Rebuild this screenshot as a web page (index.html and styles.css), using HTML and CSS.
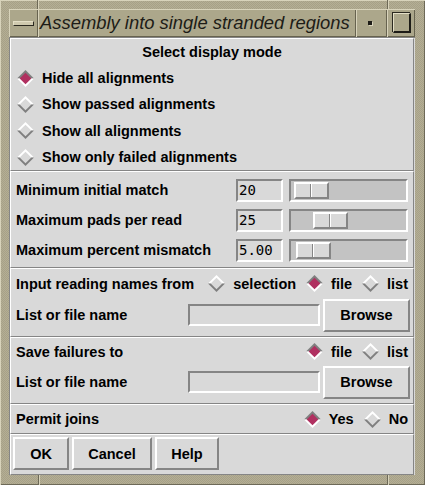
FILE: index.html
```html
<!DOCTYPE html>
<html>
  <head>
    <title>Assembly into single stranded regions</title>
    <link rel="stylesheet" href="styles.css">
  </head>
  <body>
  <svg class="defs" width="0" height="0">
    <defs>
      <symbol id="dia-on" viewBox="0 0 16 16">
        <polygon points="0,8 8,0 16,8" fill="#7f7f7f"/>
        <polygon points="0,8 8,16 16,8" fill="#ffffff"/>
        <polygon points="8,2.5 13.5,8 8,13.5 2.5,8" fill="#b03060"/>
      </symbol>
      <symbol id="dia-off" viewBox="0 0 16 16">
        <polygon points="0,8 8,0 16,8" fill="#ffffff"/>
        <polygon points="0,8 8,16 16,8" fill="#7f7f7f"/>
        <polygon points="8,2.5 13.5,8 8,13.5 2.5,8" fill="#d9d9d9"/>
      </symbol>
    </defs>
  </svg>
  <div class="window">
    <span class="notch notch-tl"></span>
    <span class="notch notch-tr"></span>
    <span class="notch notch-bl"></span>
    <span class="notch notch-br"></span>
    <div class="titlebar">
      <div class="tb-piece tb-menu"><span class="menu-bar"></span></div>
      <div class="tb-piece tb-title"><span>Assembly into single stranded regions</span></div>
      <div class="tb-piece tb-iconify"><span class="dot"></span></div>
      <div class="tb-piece tb-max"><span class="max-box"></span></div>
    </div>
    <div class="client">

      <div class="section mode">
        <div class="head">Select display mode</div>
        <div class="radio-row"><svg class="dia"><use href="#dia-on"/></svg>Hide all alignments</div>
        <div class="radio-row"><svg class="dia"><use href="#dia-off"/></svg>Show passed alignments</div>
        <div class="radio-row"><svg class="dia"><use href="#dia-off"/></svg>Show all alignments</div>
        <div class="radio-row"><svg class="dia"><use href="#dia-off"/></svg>Show only failed alignments</div>
      </div>

      <div class="section params">
        <div class="param">
          <span class="label">Minimum initial match</span>
          <span class="entry num">20</span>
          <span class="trough"><span class="slider" style="margin-left:2px"></span></span>
        </div>
        <div class="param">
          <span class="label">Maximum pads per read</span>
          <span class="entry num">25</span>
          <span class="trough"><span class="slider" style="margin-left:21px"></span></span>
        </div>
        <div class="param">
          <span class="label">Maximum percent mismatch</span>
          <span class="entry num">5.00</span>
          <span class="trough"><span class="slider" style="margin-left:4px"></span></span>
        </div>
      </div>

      <div class="section input">
        <div class="line first">
          <span class="label">Input reading names from</span>
          <span class="choices">
            <span class="choice"><svg class="dia"><use href="#dia-off"/></svg>selection</span>
            <span class="choice"><svg class="dia"><use href="#dia-on"/></svg>file</span>
            <span class="choice"><svg class="dia"><use href="#dia-off"/></svg>list</span>
          </span>
        </div>
        <div class="line file-line">
          <span class="label">List or file name</span>
          <span class="entry name"></span>
          <span class="button browse">Browse</span>
        </div>
      </div>

      <div class="section save">
        <div class="line first">
          <span class="label">Save failures to</span>
          <span class="choices">
            <span class="choice"><svg class="dia"><use href="#dia-on"/></svg>file</span>
            <span class="choice"><svg class="dia"><use href="#dia-off"/></svg>list</span>
          </span>
        </div>
        <div class="line file-line">
          <span class="label">List or file name</span>
          <span class="entry name"></span>
          <span class="button browse">Browse</span>
        </div>
      </div>

      <div class="section joins">
        <div class="line">
          <span class="label">Permit joins</span>
          <span class="choices">
            <span class="choice"><svg class="dia"><use href="#dia-on"/></svg>Yes</span>
            <span class="choice"><svg class="dia"><use href="#dia-off"/></svg>No</span>
          </span>
        </div>
      </div>

      <div class="section actions">
        <span class="button ok">OK</span>
        <span class="button cancel">Cancel</span>
        <span class="button help">Help</span>
      </div>

    </div>
  </div>
  </body>
</html>
```

FILE: styles.css
```css
body {
  margin: 0;
  background: #aea88e;
  color: #000;
  font: bold 14.5px "Liberation Sans", Arial, sans-serif;
  }
.defs {
  position: absolute;
  }
.window {
  position: relative;
  width: 425px;
  height: 485px;
  box-sizing: border-box;
  padding: 9px 10px 10px 9px;
  background-color: #aea88e;
  background-image: repeating-conic-gradient(#b4ae95 0 25%, #a7a187 0 50%);
  background-size: 2px 2px;
  box-shadow: inset 1px 1px 0 #d8d3bb, inset -1px -1px 0 #6d6957;
  }
.notch {
  position: absolute;
  width: 1px;
  height: 9px;
  background: #6d6957;
  box-shadow: 1px 0 0 #d8d3bb;
  }
.notch-tl { left: 37px; top: 0; }
.notch-tr { left: 387px; top: 0; }
.notch-bl { left: 38px; bottom: 0; height: 10px; }
.notch-br { left: 387px; bottom: 0; height: 10px; }

/* title bar */
.titlebar {
  display: flex;
  height: 28px;
  background: #aca78b;
  }
.tb-piece {
  display: flex;
  align-items: center;
  justify-content: center;
  box-sizing: border-box;
  box-shadow: inset 1px 1px 0 #d8d3bb, inset -1px -1px 0 #67634f;
  }
.tb-menu {
  width: 29px;
  }
.menu-bar {
  width: 19px;
  height: 3px;
  background: #cfc9ae;
  border: 1px solid #2b2920;
  border-top-color: #e4dfc6;
  border-left-color: #e4dfc6;
  }
.tb-title {
  flex: 1;
  justify-content: flex-start;
  padding: 0 2px 0 2px;
  }
.tb-title span {
  display: block;
  white-space: nowrap;
  font: italic 18.4px "Liberation Sans", Arial, sans-serif;
  color: #1d1c17;
  line-height: 28px;
  }
.tb-iconify {
  width: 31px;
  }
.dot {
  width: 4px;
  height: 4px;
  background: #1d1c17;
  box-shadow: 1px 1px 0 #d8d3bb;
  margin-right: 3px;
  }
.tb-max {
  width: 28px;
  }
.max-box {
  width: 15px;
  height: 17px;
  border: 1px solid #e4dfc6;
  border-right: 2px solid #1d1c17;
  border-bottom: 2px solid #1d1c17;
  box-shadow: -1px -1px 0 #2b2920;
  margin-left: 2px;
  }

/* dialog body */
.client {
  height: 438px;
  box-sizing: border-box;
  padding: 1px 1px 0 1px;
  background: #d9d9d9;
  box-shadow: inset 1px 1px 0 #858585;
  }
.section {
  box-sizing: border-box;
  border: 1px solid;
  border-color: #ffffff #858585 #858585 #ffffff;
  }
.mode { height: 133px; }
.params { height: 97px; padding-top: 3px; }
.input { height: 69px; }
.save { height: 67px; }
.joins { height: 30px; }
.actions {
  height: 41px;
  display: flex;
  gap: 3px;
  padding: 2px 2px 0 2px;
  }

.head {
  height: 26px;
  line-height: 26px;
  text-align: center;
  }
.radio-row {
  display: flex;
  align-items: center;
  height: 26px;
  padding-left: 6px;
  }
.radio-row:nth-child(4) {
  height: 27px;
  }
.dia {
  width: 17px;
  height: 17px;
  flex: none;
  margin-right: 8px;
  }

.param {
  display: grid;
  grid-template-columns: 1fr 47px 119px;
  column-gap: 6px;
  align-items: center;
  height: 30px;
  padding: 0 5px;
  }
.label {
  white-space: nowrap;
  }
.entry {
  box-sizing: border-box;
  height: 23px;
  border: 2px solid;
  border-color: #858585 #ffffff #ffffff #858585;
  background: #d9d9d9;
  }
.num {
  font: 14px "DejaVu Sans Mono", monospace;
  line-height: 19px;
  padding-left: 1px;
  }
.trough {
  display: flex;
  box-sizing: border-box;
  height: 23px;
  padding: 1px;
  border: 2px solid;
  border-color: #858585 #ffffff #ffffff #858585;
  background: #c3c3c3;
  }
.slider {
  box-sizing: border-box;
  width: 35px;
  height: 17px;
  border: 2px solid;
  border-color: #ffffff #858585 #858585 #ffffff;
  background: linear-gradient(to right, #d9d9d9 14px, #858585 14px, #858585 15px, #ffffff 15px, #ffffff 16px, #d9d9d9 16px);
  }

.line {
  display: flex;
  align-items: center;
  padding: 0 5px;
  height: 28px;
  }
.input .first { height: 29px; }
.save .first { height: 27px; }
.file-line {
  height: 34px;
  padding-right: 3px;
  }
.choices {
  display: flex;
  gap: 10px;
  margin-left: auto;
  }
.choice {
  display: flex;
  align-items: center;
  }
.choice .dia {
  margin-right: 8px;
  }
.name {
  width: 132px;
  height: 22px;
  margin-left: auto;
  margin-right: 3px;
  }
.button {
  display: flex;
  align-items: center;
  justify-content: center;
  box-sizing: border-box;
  height: 33px;
  border: 2px solid;
  border-color: #ffffff #858585 #858585 #ffffff;
  background: #d9d9d9;
  }
.browse { width: 87px; }
.ok { width: 56px; }
.cancel { width: 80px; }
.help { width: 64px; }
```
